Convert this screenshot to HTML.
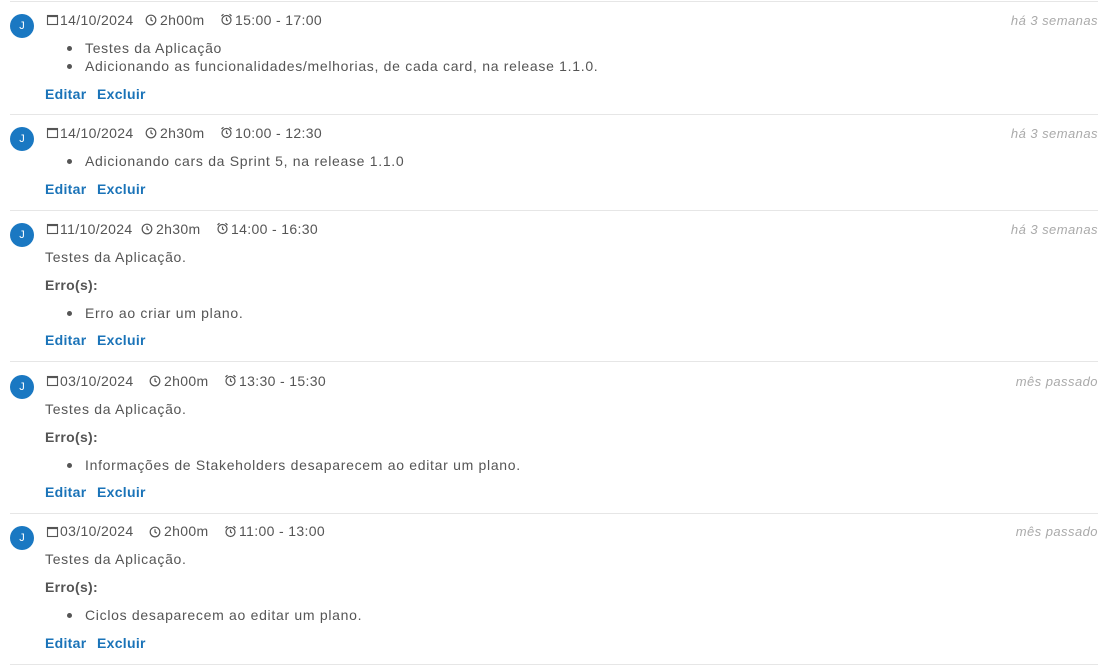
<!DOCTYPE html>
<html><head><meta charset="utf-8"><style>
body{margin:0;width:1109px;height:666px;background:#fff;position:relative;overflow:hidden;font-family:"Liberation Sans",sans-serif;color:#555;font-size:14px;letter-spacing:0.7px}
.t{position:absolute;line-height:20px;white-space:nowrap}
.hr{position:absolute;left:10px;width:1088px;height:1px;background:#e6e6e6}
.av{position:absolute;left:10px;width:24px;height:24px;border-radius:50%;background:#1a78c2;color:#fff;font-size:11px;text-align:center;line-height:24px;letter-spacing:0}
.ago{position:absolute;right:11px;font-style:italic;color:#aaa;font-size:13px;line-height:20px;letter-spacing:0.45px}
.a{color:#1a73b8;font-weight:bold;letter-spacing:0.3px}
.m{letter-spacing:0.35px}
.dot{position:absolute;width:5px;height:5px;border-radius:50%;background:#555}
svg{position:absolute}
b{color:#555;letter-spacing:0.3px}
</style></head><body>
<div class="hr" style="top:1px"></div>
<div class="hr" style="top:114px"></div>
<div class="hr" style="top:210px"></div>
<div class="hr" style="top:361px"></div>
<div class="hr" style="top:513px"></div>
<div class="hr" style="top:664px"></div>

<!-- Item 1 -->
<div class="av" style="top:14px">J</div>
<svg style="left:46px;top:13px" width="13" height="13" viewBox="0 0 13 13"><rect x="1.5" y="2.5" width="10" height="9" fill="none" stroke="#555" stroke-width="1.1"/><rect x="1.5" y="2.5" width="10" height="1.6" fill="#555"/></svg>
<div class="t m" style="left:60px;top:10px">14/10/2024</div>
<svg style="left:145px;top:14px" width="12" height="12" viewBox="0 0 12 12"><circle cx="6" cy="6" r="4.8" fill="none" stroke="#555" stroke-width="1.2"/><path d="M6 3.2V6l1.8 1.2" fill="none" stroke="#555" stroke-width="1.2"/></svg>
<div class="t m" style="left:160px;top:10px">2h00m</div>
<svg style="left:220px;top:13px" width="13" height="13" viewBox="0 0 13 13"><circle cx="6.5" cy="7" r="4.5" fill="none" stroke="#555" stroke-width="1.2"/><path d="M6.5 4.5V7l1.5 1M1.5 3l2-1.8M11.5 3l-2-1.8" fill="none" stroke="#555" stroke-width="1.2"/></svg>
<div class="t m" style="left:235px;top:10px">15:00 - 17:00</div>
<div class="ago" style="top:11px">há 3 semanas</div>
<div class="dot" style="left:67px;top:46px"></div><div class="t" style="left:85px;top:38px">Testes da Aplicação</div>
<div class="dot" style="left:67px;top:64px"></div><div class="t" style="left:85px;top:56px">Adicionando as funcionalidades/melhorias, de cada card, na release 1.1.0.</div>
<div class="t a" style="left:45px;top:84px">Editar</div><div class="t a" style="left:97px;top:84px">Excluir</div>

<!-- Item 2 -->
<div class="av" style="top:127px">J</div>
<svg style="left:46px;top:126px" width="13" height="13" viewBox="0 0 13 13"><rect x="1.5" y="2.5" width="10" height="9" fill="none" stroke="#555" stroke-width="1.1"/><rect x="1.5" y="2.5" width="10" height="1.6" fill="#555"/></svg>
<div class="t m" style="left:60px;top:123px">14/10/2024</div>
<svg style="left:145px;top:127px" width="12" height="12" viewBox="0 0 12 12"><circle cx="6" cy="6" r="4.8" fill="none" stroke="#555" stroke-width="1.2"/><path d="M6 3.2V6l1.8 1.2" fill="none" stroke="#555" stroke-width="1.2"/></svg>
<div class="t m" style="left:160px;top:123px">2h30m</div>
<svg style="left:220px;top:126px" width="13" height="13" viewBox="0 0 13 13"><circle cx="6.5" cy="7" r="4.5" fill="none" stroke="#555" stroke-width="1.2"/><path d="M6.5 4.5V7l1.5 1M1.5 3l2-1.8M11.5 3l-2-1.8" fill="none" stroke="#555" stroke-width="1.2"/></svg>
<div class="t m" style="left:235px;top:123px">10:00 - 12:30</div>
<div class="ago" style="top:124px">há 3 semanas</div>
<div class="dot" style="left:67px;top:159px"></div><div class="t" style="left:85px;top:151px">Adicionando cars da Sprint 5, na release 1.1.0</div>
<div class="t a" style="left:45px;top:179px">Editar</div><div class="t a" style="left:97px;top:179px">Excluir</div>

<!-- Item 3 -->
<div class="av" style="top:223px">J</div>
<svg style="left:46px;top:222px" width="13" height="13" viewBox="0 0 13 13"><rect x="1.5" y="2.5" width="10" height="9" fill="none" stroke="#555" stroke-width="1.1"/><rect x="1.5" y="2.5" width="10" height="1.6" fill="#555"/></svg>
<div class="t m" style="left:60px;top:219px">11/10/2024</div>
<svg style="left:141px;top:223px" width="12" height="12" viewBox="0 0 12 12"><circle cx="6" cy="6" r="4.8" fill="none" stroke="#555" stroke-width="1.2"/><path d="M6 3.2V6l1.8 1.2" fill="none" stroke="#555" stroke-width="1.2"/></svg>
<div class="t m" style="left:156px;top:219px">2h30m</div>
<svg style="left:216px;top:222px" width="13" height="13" viewBox="0 0 13 13"><circle cx="6.5" cy="7" r="4.5" fill="none" stroke="#555" stroke-width="1.2"/><path d="M6.5 4.5V7l1.5 1M1.5 3l2-1.8M11.5 3l-2-1.8" fill="none" stroke="#555" stroke-width="1.2"/></svg>
<div class="t m" style="left:231px;top:219px">14:00 - 16:30</div>
<div class="ago" style="top:220px">há 3 semanas</div>
<div class="t" style="left:45px;top:247px">Testes da Aplicação.</div>
<div class="t" style="left:45px;top:275px"><b>Erro(s):</b></div>
<div class="dot" style="left:67px;top:311px"></div><div class="t" style="left:85px;top:303px">Erro ao criar um plano.</div>
<div class="t a" style="left:45px;top:330px">Editar</div><div class="t a" style="left:97px;top:330px">Excluir</div>

<!-- Item 4 -->
<div class="av" style="top:375px">J</div>
<svg style="left:46px;top:374px" width="13" height="13" viewBox="0 0 13 13"><rect x="1.5" y="2.5" width="10" height="9" fill="none" stroke="#555" stroke-width="1.1"/><rect x="1.5" y="2.5" width="10" height="1.6" fill="#555"/></svg>
<div class="t m" style="left:60px;top:371px">03/10/2024</div>
<svg style="left:149px;top:375px" width="12" height="12" viewBox="0 0 12 12"><circle cx="6" cy="6" r="4.8" fill="none" stroke="#555" stroke-width="1.2"/><path d="M6 3.2V6l1.8 1.2" fill="none" stroke="#555" stroke-width="1.2"/></svg>
<div class="t m" style="left:164px;top:371px">2h00m</div>
<svg style="left:224px;top:374px" width="13" height="13" viewBox="0 0 13 13"><circle cx="6.5" cy="7" r="4.5" fill="none" stroke="#555" stroke-width="1.2"/><path d="M6.5 4.5V7l1.5 1M1.5 3l2-1.8M11.5 3l-2-1.8" fill="none" stroke="#555" stroke-width="1.2"/></svg>
<div class="t m" style="left:239px;top:371px">13:30 - 15:30</div>
<div class="ago" style="top:372px">mês passado</div>
<div class="t" style="left:45px;top:399px">Testes da Aplicação.</div>
<div class="t" style="left:45px;top:427px"><b>Erro(s):</b></div>
<div class="dot" style="left:67px;top:463px"></div><div class="t" style="left:85px;top:455px">Informações de Stakeholders desaparecem ao editar um plano.</div>
<div class="t a" style="left:45px;top:482px">Editar</div><div class="t a" style="left:97px;top:482px">Excluir</div>

<!-- Item 5 -->
<div class="av" style="top:526px">J</div>
<svg style="left:46px;top:525px" width="13" height="13" viewBox="0 0 13 13"><rect x="1.5" y="2.5" width="10" height="9" fill="none" stroke="#555" stroke-width="1.1"/><rect x="1.5" y="2.5" width="10" height="1.6" fill="#555"/></svg>
<div class="t m" style="left:60px;top:521px">03/10/2024</div>
<svg style="left:149px;top:526px" width="12" height="12" viewBox="0 0 12 12"><circle cx="6" cy="6" r="4.8" fill="none" stroke="#555" stroke-width="1.2"/><path d="M6 3.2V6l1.8 1.2" fill="none" stroke="#555" stroke-width="1.2"/></svg>
<div class="t m" style="left:164px;top:521px">2h00m</div>
<svg style="left:224px;top:525px" width="13" height="13" viewBox="0 0 13 13"><circle cx="6.5" cy="7" r="4.5" fill="none" stroke="#555" stroke-width="1.2"/><path d="M6.5 4.5V7l1.5 1M1.5 3l2-1.8M11.5 3l-2-1.8" fill="none" stroke="#555" stroke-width="1.2"/></svg>
<div class="t m" style="left:239px;top:521px">11:00 - 13:00</div>
<div class="ago" style="top:522px">mês passado</div>
<div class="t" style="left:45px;top:549px">Testes da Aplicação.</div>
<div class="t" style="left:45px;top:577px"><b>Erro(s):</b></div>
<div class="dot" style="left:67px;top:613px"></div><div class="t" style="left:85px;top:605px">Ciclos desaparecem ao editar um plano.</div>
<div class="t a" style="left:45px;top:633px">Editar</div><div class="t a" style="left:97px;top:633px">Excluir</div>
</body></html>
